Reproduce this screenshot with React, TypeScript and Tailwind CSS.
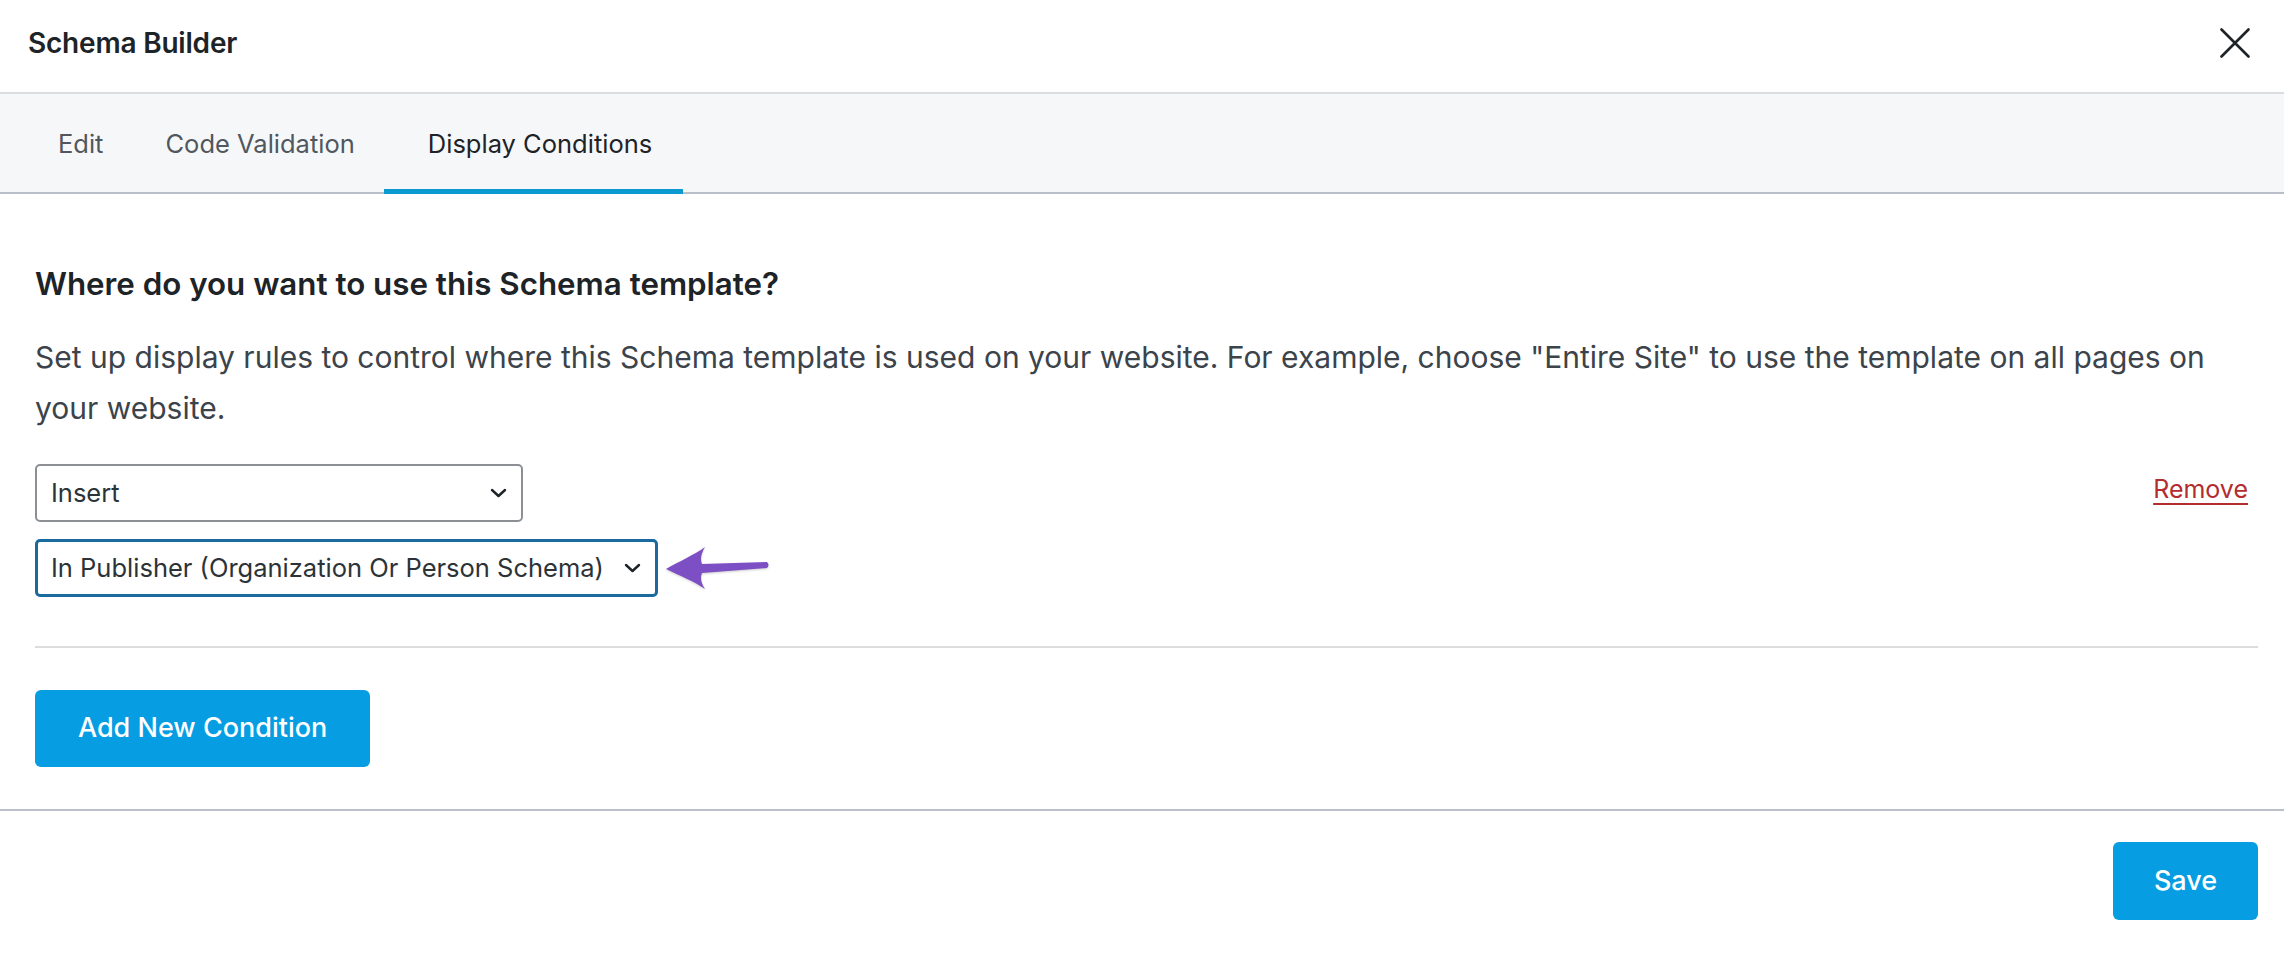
function Chevron() {
  return (
    <svg width="17" height="10" viewBox="0 0 17 10" fill="none" className="shrink-0">
      <path d="M2 2l6.5 6 6.5-6" stroke="#1d2327" strokeWidth="2.4" strokeLinecap="round" strokeLinejoin="round" />
    </svg>
  );
}

function CloseIcon() {
  return (
    <svg width="30" height="30" viewBox="0 0 30 30" fill="none">
      <path d="M1.5 1.5l27 27M28.5 1.5l-27 27" stroke="#1d2327" strokeWidth="2.6" strokeLinecap="round" />
    </svg>
  );
}

function PointerArrow() {
  return (
    <svg width="104" height="44" viewBox="0 0 104 44" className="shrink-0 drop-shadow-[0_1px_1px_rgba(0,0,0,0.2)]">
      <path
        d="M0 23 C 14 15, 28 9, 39 1 C 35 8, 34 13, 36 18 L 101 16 Q 104 19 101 22 L 36 27 C 34 32, 35 37, 39 43 C 28 35, 14 30, 0 23 Z"
        fill="#7d4fc4"
      />
    </svg>
  );
}

export default function App() {
  return (
    <div className="min-h-screen w-full bg-white font-['Inter','Liberation_Sans',sans-serif] text-[#1d2327]">
      {/* Header */}
      <div className="h-[94px] flex items-center justify-between pl-[28px] pr-[34px] pb-[6px] border-b-2 border-[#dcdde1]">
        <h2 className="text-[28px] font-semibold tracking-[-0.2px]">Schema Builder</h2>
        <button>
          <CloseIcon />
        </button>
      </div>

      {/* Tabs */}
      <div className="h-[100px] flex items-stretch pl-[28px] bg-[#f6f7f9] border-b-2 border-[#b9c0ca]">
        <button className="pl-[30px] pr-[30px] flex items-center text-[25.5px] text-[#50575e] pt-[2px]">Edit</button>
        <button className="pl-[32px] pr-[29px] flex items-center text-[25.5px] text-[#50575e] pt-[2px]">
          Code Validation
        </button>
        <button className="pl-[44px] pr-[31px] flex items-center text-[25.5px] text-[#1d2327] border-b-[5px] border-[#0b9bd0] -mb-[2px] pt-[5px]">
          Display Conditions
        </button>
      </div>

      {/* Content */}
      <div className="pl-[35px] pr-[26px]">
        <h3 className="mt-[71px] text-[31.3px] leading-[38px] font-semibold">
          Where do you want to use this Schema template?
        </h3>
        <p className="mt-[29px] text-[30px] leading-[51px] text-[#3c434a]">
          Set up display rules to control where this Schema template is used on your website. For example, choose
          "Entire Site" to use the template on all pages on your website.
        </p>

        <div className="mt-[30px] flex items-start justify-between">
          <div className="flex flex-col gap-[17px]">
            <div className="w-[488px] h-[58px] flex items-center justify-between pl-[14px] pr-[14px] border-2 border-[#8c8f94] rounded-[5px] text-[25.5px] text-[#2c3338]">
              <span>Insert</span>
              <Chevron />
            </div>
            <div className="flex items-center gap-[8px]">
              <div className="w-[623px] h-[58px] flex items-center justify-between pl-[13px] pr-[14px] border-[3px] border-[#1a6aa0] rounded-[5px] text-[25.5px] text-[#2c3338]">
                <span>In Publisher (Organization Or Person Schema)</span>
                <Chevron />
              </div>
              <PointerArrow />
            </div>
          </div>
          <div className="h-[52px] flex items-center pr-[10px]">
            <a href="#" className="text-[25px] text-[#b32d2e] underline underline-offset-[5px] decoration-[2px]">
              Remove
            </a>
          </div>
        </div>

        <div className="mt-[49px] h-[2px] bg-[#dcdcde]" />

        <button className="mt-[42px] mb-[42px] h-[77px] px-[43px] rounded-[6px] bg-[#079de3] text-white text-[27px] font-medium">
          Add New Condition
        </button>
      </div>

      {/* Footer */}
      <div className="border-t-2 border-[#b9c0ca] flex justify-end pr-[26px] pt-[31px]">
        <button className="w-[145px] h-[78px] rounded-[6px] bg-[#079de3] text-white text-[27px] font-medium">
          Save
        </button>
      </div>
    </div>
  );
}
